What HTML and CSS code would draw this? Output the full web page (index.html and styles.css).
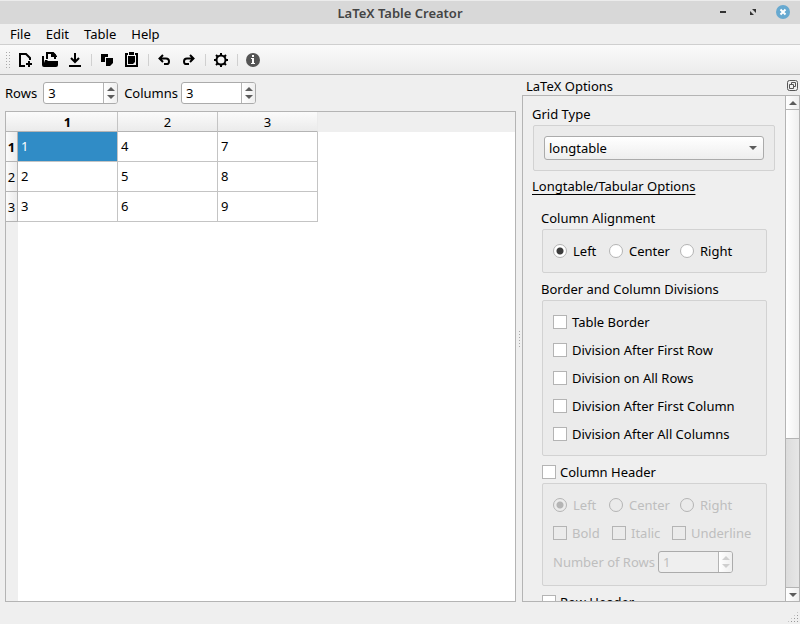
FILE: index.html
```html
<!DOCTYPE html>
<html lang="en">
<head>
<meta charset="utf-8">
<title>LaTeX Table Creator</title>
<link rel="stylesheet" href="styles.css">
</head>
<body>
<header class="titlebar">
  <h1>LaTeX Table Creator</h1>
  <div class="window-buttons">
    <button aria-label="Minimize"><svg width="14" height="14"><path d="M4 6h6v2H4z" fill="#333"/></svg></button>
    <button aria-label="Maximize"><svg width="14" height="14"><path d="M6 4h4v4zM4 6v4h4z" fill="#333"/></svg></button>
    <button aria-label="Close"><svg width="14" height="14"><circle cx="7" cy="7" r="7" fill="#67a9d0"/><path d="M4.500 4.500l5 5m0-5l-5 5" stroke="#fff" stroke-width="2"/></svg></button>
  </div>
</header>
<nav class="menubar">
  <button>File</button><button>Edit</button><button>Table</button><button>Help</button>
</nav>
<div class="toolbar" role="toolbar">
  <span class="grip"></span>
  <button aria-label="New"><svg width="16" height="16" fill="none" stroke="#000" stroke-width="2"><path d="M8 14H3V2h6l4 4v2"/><path d="M9 12h6M12 9v6"/></svg></button>
  <button aria-label="Open"><svg width="16" height="16"><path d="M0 4h2v8H0z"/><path d="M5 7V1h6l2 2v4" fill="none" stroke="#000" stroke-width="2"/><path d="M9 0h2l4 4v1H9z"/><path d="M3 8h2l1 1h10v4q0 2-2 2H2q-2 0-2-2v-2h2z"/></svg></button>
  <button aria-label="Save"><svg width="16" height="16"><path d="M7 1h2v9H7zM2 13h12v2H2z"/><path d="M4 6l4 4 4-4" fill="none" stroke="#000" stroke-width="2"/></svg></button>
  <span class="divider"></span>
  <button aria-label="Copy"><svg width="16" height="16"><path d="M2 2h7v3H6v5H2zM7 6h7v5l-3 3H7z"/></svg></button>
  <button aria-label="Paste"><svg width="16" height="16"><path d="M4 2H2v12h11V2h-2" fill="none" stroke="#000" stroke-width="2"/><path d="M5 0h5v3H5zM4 4h7v6l-2 2H4z"/></svg></button>
  <span class="divider"></span>
  <button aria-label="Undo"><svg width="16" height="16" fill="none" stroke="#000" stroke-width="2"><path d="M7 3L3.500 6.500 7 10M3 6.500h7q3 0 3 3T10 12H8"/></svg></button>
  <button aria-label="Redo"><svg width="16" height="16" fill="none" stroke="#000" stroke-width="2"><path d="M9 3l3.500 3.500L9 10M13 6.500H6q-3 0-3 3T6 12h2"/></svg></button>
  <span class="divider"></span>
  <button aria-label="Settings"><svg width="16" height="16" fill="none" stroke="#000"><circle cx="8" cy="8" r="4.500" stroke-width="2"/><path d="M8 1v3M8 12v3M1 8h3M12 8h3M3 3l2 2M11 11l2 2M13 3l-2 2M5 11l-2 2" stroke-width="2"/></svg></button>
  <span class="divider"></span>
  <button aria-label="About"><svg width="16" height="16"><circle cx="8" cy="8" r="7" fill="#555"/><path d="M7 3h2v2H7zM6 6h3v5h1v1H6v-1h1V7H6z" fill="#fff"/></svg></button>
</div>
<main>
  <section class="editor">
    <div class="size-bar">
      <label for="rows">Rows</label>
      <span class="spin"><input id="rows" value="3"><button class="step" aria-label="Step rows"></button></span>
      <label for="cols">Columns</label>
      <span class="spin"><input id="cols" value="3"><button class="step" aria-label="Step columns"></button></span>
    </div>
    <div class="sheet">
      <table>
        <thead><tr><td class="corner"></td><th class="current">1</th><th>2</th><th>3</th></tr></thead>
        <tbody>
          <tr><th class="current">1</th><td class="selected">1</td><td>4</td><td>7</td></tr>
          <tr><th>2</th><td>2</td><td>5</td><td>8</td></tr>
          <tr><th>3</th><td>3</td><td>6</td><td>9</td></tr>
        </tbody>
      </table>
    </div>
  </section>
  <div class="splitter"><span></span></div>
  <aside class="dock">
    <div class="dock-title"><h2>LaTeX Options</h2>
      <button aria-label="Float"><svg width="11" height="11" fill="none" stroke="#555"><rect x=".5" y=".5" width="10" height="10" rx="2"/><path d="M4.500 4.500v-2h4v4h-2M2.500 4.500h4v4h-4z"/></svg></button>
    </div>
    <div class="dock-frame">
      <div class="options">
        <label class="caption" for="grid-type">Grid Type</label>
        <div class="group"><select id="grid-type"><option>longtable</option></select></div>
        <h3>Longtable/Tabular Options</h3>
        <div class="nested">
          <div class="caption">Column Alignment</div>
          <div class="group">
            <div class="radios">
              <label><input type="radio" name="align" checked>Left</label>
              <label><input type="radio" name="align">Center</label>
              <label><input type="radio" name="align">Right</label>
            </div>
          </div>
          <div class="caption">Border and Column Divisions</div>
          <div class="group">
            <label><input type="checkbox">Table Border</label>
            <label><input type="checkbox">Division After First Row</label>
            <label><input type="checkbox">Division on All Rows</label>
            <label><input type="checkbox">Division After First Column</label>
            <label><input type="checkbox">Division After All Columns</label>
          </div>
          <label class="caption toggle"><input type="checkbox">Column Header</label>
          <fieldset class="group" disabled>
            <div class="radios">
              <label><input type="radio" name="header-align" checked>Left</label>
              <label><input type="radio" name="header-align">Center</label>
              <label><input type="radio" name="header-align">Right</label>
            </div>
            <div class="checks">
              <label><input type="checkbox">Bold</label>
              <label><input type="checkbox">Italic</label>
              <label><input type="checkbox">Underline</label>
            </div>
            <div class="number">
              <label for="header-rows">Number of Rows</label>
              <span class="spin"><input id="header-rows" value="1"><button class="step" aria-label="Step header rows"></button></span>
            </div>
          </fieldset>
          <label class="caption toggle"><input type="checkbox">Row Header</label>
        </div>
      </div>
      <div class="scrollbar">
        <button class="up" aria-label="Scroll up"></button>
        <div class="track"><div class="thumb"></div></div>
        <button class="down" aria-label="Scroll down"></button>
      </div>
    </div>
  </aside>
</main>
<footer><span class="size-grip"></span></footer>
</body>
</html>
```
FILE: styles.css
```css
* { box-sizing: border-box; }
html, body { height: 100%; }
body {
  margin: 0;
  display: flex;
  flex-direction: column;
  overflow: hidden;
  background: #efefef;
  color: #000;
  font: 13px/18px "Noto Sans", "Open Sans", sans-serif;
}
h1, h2, h3 { margin: 0; font-size: 13px; font-weight: 400; }
button, input, select { font: inherit; color: inherit; }
button { padding: 0; border: 0; background: none; }
svg { display: block; }

.titlebar {
  position: relative;
  height: 24px;
  padding-top: 3px;
  border-top: 1px solid #ececec;
  background: #d8d8d8;
  text-align: center;
}
.titlebar h1 { font-weight: 600; color: #444; }
.window-buttons { position: absolute; right: 10px; top: 4px; display: flex; gap: 16px; }

.menubar { display: flex; gap: 15px; height: 21px; padding: 0 10px; border-bottom: 1px solid #cfcfcf; }
.toolbar {
  display: flex;
  align-items: center;
  height: 30px;
  padding: 1px 0 0 5px;
  border-bottom: 1px solid #b4b4b4;
  background: linear-gradient(#fafafa, #ececec);
}
.toolbar button { padding: 0 4px; margin-right: 1px; }
.toolbar .grip { width: 5px; height: 18px; margin-right: 3px; background: radial-gradient(circle, #aaa 25%, transparent 30%) 0 0 / 3px 3px; }
.divider { width: 1px; height: 12px; margin: 0 3px; background: #d0d0d0; }

main { flex: 1; min-height: 0; display: flex; padding: 1px 0 0 5px; }
.editor { flex: 1; min-width: 0; display: flex; flex-direction: column; }
.size-bar { display: flex; align-items: center; gap: 6px; height: 35px; padding-bottom: 1px; }
.size-bar label:last-of-type { margin-right: -3px; }
.spin {
  display: flex;
  width: 75px;
  height: 22px;
  border: 1px solid #ababab;
  border-radius: 3px;
  background: #fff;
  overflow: hidden;
}
.spin input { flex: 1; min-width: 0; padding: 0 4px; border: 0; background: none; }
.step, .up, .down, .thumb { background: linear-gradient(90deg, #fff, #efefef); }
.step {
  display: flex;
  flex-direction: column;
  align-items: center;
  justify-content: center;
  gap: 4px;
  width: 14px;
  border-left: 1px solid #b4b4b4;
}
.step::before, .up::before { content: ""; border: 4px solid transparent; border-top: 0; border-bottom: 4px solid #5c5c5c; }
.step::after, .down::before { content: ""; border: 4px solid transparent; border-bottom: 0; border-top: 4px solid #5c5c5c; }

.sheet {
  flex: 1;
  border: 1px solid #b4b4b4;
  background: linear-gradient(#efefef, #efefef) 0 0 / 100% 20px no-repeat, linear-gradient(#efefef, #efefef) 0 0 / 12px 100% no-repeat, #fff;
}
table { border-collapse: separate; border-spacing: 0; table-layout: fixed; width: 312px; }
td, th { padding: 0 3px; border: 0 solid #c4c4c4; border-width: 0 1px 1px 0; font-weight: 400; }
thead th, .corner { height: 20px; background: linear-gradient(#fbfbfb, #ebebeb); border-bottom-color: #b4b4b4; }
thead th { padding: 1px 0 0; }
thead th:last-child { border-right-color: #ebebeb; }
.corner { width: 12px; border-right: 0; }
tbody td, tbody th { height: 30px; }
tbody td { padding-bottom: 1px; }
tbody th { padding: 0; background: linear-gradient(90deg, #fbfbfb, #ebebeb); border-color: #b4b4b4; }
.current { font-weight: 700; }
.selected { background: #308cc6; color: #fff; }

.splitter { width: 6px; display: flex; align-items: center; justify-content: center; }
.splitter span { width: 3px; height: 18px; background: radial-gradient(circle, #aaa 25%, transparent 30%) 0 0 / 3px 3px; }

.dock { width: 278px; display: flex; flex-direction: column; }
.dock-title { display: flex; justify-content: space-between; align-items: center; height: 19px; padding: 0 2px 0 4px; }
.dock-frame { flex: 1; min-height: 0; display: flex; border: 1px solid #b4b4b4; }
.options { flex: 1; min-width: 0; padding: 9px 10px 0 9px; overflow: hidden; }
.options h3 { margin: 6px 0 14px; text-decoration: underline; text-underline-offset: 3px; }
.nested { padding: 0 8px 0 9px; }
.caption { display: block; }
.options > .group { margin: 2px 0 0 1px; }
.nested .group { margin: 2px 0 7px 1px; }
.group {
  display: flex;
  flex-direction: column;
  gap: 6px;
  min-width: 0;
  margin: 0;
  padding: 10px;
  border: 1px solid #d2d2d2;
  border-radius: 2px;
  background: #ebebeb;
}
.group label { display: flex; align-items: center; height: 22px; gap: 5px; white-space: nowrap; }
.radios label { gap: 6px; }
.radios { display: grid; grid-template-columns: 56px 71px auto; }
.checks { display: grid; grid-template-columns: 59px 60px auto; }
.number { display: flex; align-items: center; justify-content: space-between; padding: 1px 23px 2px 0; }
.toggle { display: flex; align-items: center; gap: 4px; padding-left: 1px; }
.options input[type] { appearance: none; flex: none; width: 14px; height: 14px; margin: 0; border: 1px solid #b4b4b4; background: #fff; }
.options input[type="radio"] { border-radius: 50%; }
.options input[type="radio"]:checked { background: radial-gradient(circle, #3c3c3c 3px, #fff 4px); }
.options fieldset input[type] { background: none; }
.options fieldset input[type="radio"]:checked { background: radial-gradient(circle, #b4b4b4 3px, transparent 4px); }
fieldset { color: #bebebe; }
fieldset .spin { background: #efefef; }
fieldset .step::before { border-bottom-color: #cfcfcf; }
fieldset .step::after { border-top-color: #cfcfcf; }
select {
  appearance: none;
  width: 100%;
  height: 24px;
  padding: 0 4px;
  border: 1px solid #ababab;
  border-radius: 3px;
  background: linear-gradient(#fff, #eee);
}
.options > .group { position: relative; }
.options > .group::after { content: ""; position: absolute; right: 17px; top: 20px; border: 4px solid transparent; border-bottom: 0; border-top-color: #5c5c5c; pointer-events: none; }

.scrollbar { width: 14px; display: flex; flex-direction: column; border-left: 1px solid #b4b4b4; }
.up, .down { display: flex; align-items: center; justify-content: center; height: 14px; }
.up { border-bottom: 1px solid #b4b4b4; }
.down { border-top: 1px solid #b4b4b4; }
.track { flex: 1; background: linear-gradient(90deg, #dcdcdc, #e6e6e6); }
.thumb { height: 69%; border-bottom: 1px solid #b4b4b4; }

footer { display: flex; justify-content: flex-end; align-items: flex-end; height: 22px; padding: 0 1px 1px 0; }
.size-grip { width: 12px; height: 12px; background: radial-gradient(circle, #999 25%, transparent 30%) 0 0 / 3px 3px; clip-path: polygon(100% 0, 100% 100%, 0 100%); }
```
